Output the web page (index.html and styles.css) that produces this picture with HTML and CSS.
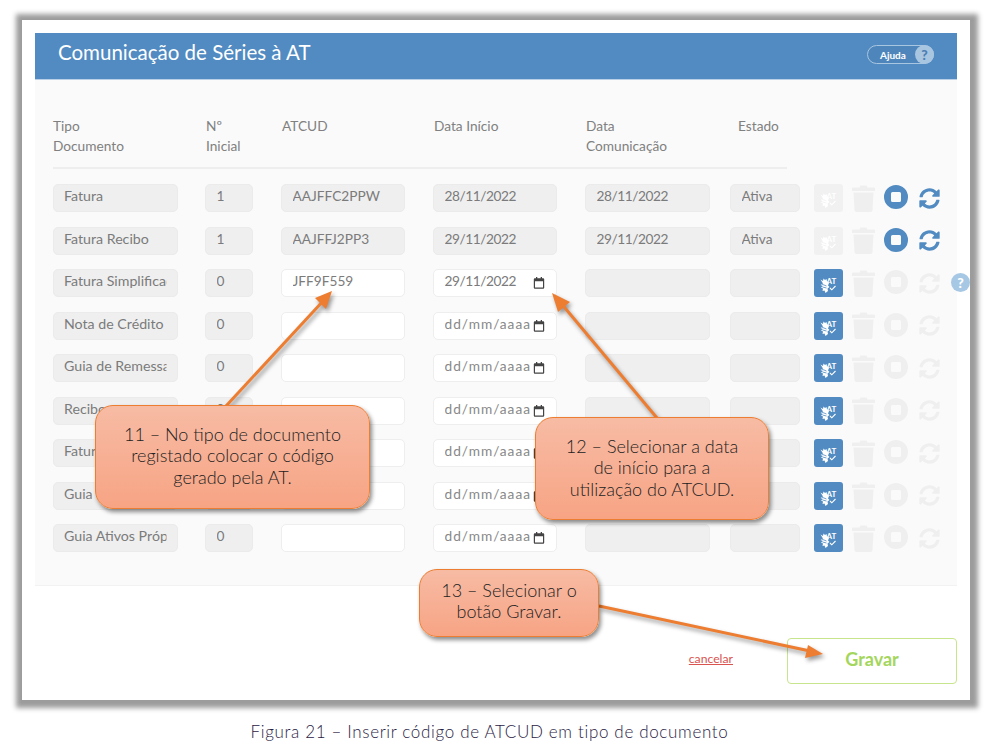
FILE: index.html
```html
<!DOCTYPE html>
<html lang="pt">
<head>
<meta charset="utf-8">
<title>Comunicação de Séries à AT</title>
<link rel="stylesheet" href="styles.css">
</head>
<body>
<svg class="defs" width="0" height="0" aria-hidden="true">
  <symbol id="at" viewBox="0 0 28 28">
    <path fill="#fff" d="M6 10.500l2.500 1.500 .5-2.500 1.500 1.500 1.500-1 .5 2 2 2-1 2.500 1.500 1.500-2 1.500 .5 2.500-2.500 2-1-2.500-2 .5 .5-2.500-2-1 2-1.500-2.500-1 2.500-1.500z"/>
    <path fill="none" stroke="currentColor" stroke-width=".8" d="M7 15l5 2M8 18l4 1"/>
    <text x="17" y="14.500" class="at-text">AT</text>
    <path fill="none" stroke="#fff" stroke-width="1.100" d="M15.500 19l1.800 1.800 3.700-3.800"/>
  </symbol>
  <symbol id="trash" viewBox="0 0 23 27">
    <path d="M0 3.500q0-1 1-1h6.500l1-2h6l1 2H22q1 0 1 1V6H0zM1.500 7.500h20l-1 17.500a2 2 0 0 1-2 2H4.500a2 2 0 0 1-2-2z"/>
  </symbol>
  <symbol id="stop" viewBox="0 0 24 24">
    <path fill-rule="evenodd" d="M12 0a12 12 0 1 1 0 24a12 12 0 0 1 0-24zM8.500 7a1.500 1.500 0 0 0-1.500 1.500v7a1.500 1.500 0 0 0 1.500 1.500h7a1.500 1.500 0 0 0 1.500-1.500v-7a1.500 1.500 0 0 0-1.500-1.500z"/>
  </symbol>
  <symbol id="sync" viewBox="0 0 512 512">
    <path d="M370.72 133.28C339.458 104.008 298.888 87.962 255.848 88c-77.458.068-144.328 53.178-162.791 126.85-1.344 5.363-6.122 9.15-11.651 9.15H24.103c-7.498 0-13.194-6.807-11.807-14.176C33.933 94.924 134.813 8 256 8c66.448 0 126.791 26.136 171.315 68.685L463.03 40.97C478.149 25.851 504 36.559 504 57.941V192c0 13.255-10.745 24-24 24H345.941c-21.382 0-32.09-25.851-16.971-40.971l41.75-41.749zM32 296h134.059c21.382 0 32.09 25.851 16.971 40.971l-41.75 41.75c31.262 29.273 71.835 45.319 114.876 45.28 77.418-.07 144.315-53.144 162.787-126.849 1.344-5.363 6.122-9.15 11.651-9.15h57.304c7.498 0 13.194 6.807 11.807 14.176C478.067 417.076 377.187 504 256 504c-66.448 0-126.791-26.136-171.315-68.685L48.97 471.03C33.851 486.149 8 475.441 8 454.059V320c0-13.255 10.745-24 24-24z"/>
  </symbol>
  <symbol id="cal" viewBox="0 0 12 12">
    <path fill-rule="evenodd" d="M3 0h1.300v1.200h3.400V0H9v1.200h1.200A1 1 0 0 1 11.200 2.200v8.600a1 1 0 0 1-1 1H1.800a1 1 0 0 1-1-1V2.200a1 1 0 0 1 1-1H3zM2 4.200v6.400h8V4.200z"/>
  </symbol>
</svg>

<main class="frame">
  <section class="panel">
    <header class="panel-head">
      <h1 class="title">Comunicação de Séries à AT</h1>
      <div class="ajuda"><span class="ajuda-label">Ajuda</span><span class="ajuda-q">?</span></div>
    </header>
    <div class="panel-body">
      <div class="table-head">
        <div class="th c1 th-first">Tipo<br>Documento</div>
        <div class="th c2">Nº<br>Inicial</div>
        <div class="th c3">ATCUD</div>
        <div class="th c4">Data Início</div>
        <div class="th c5">Data<br>Comunicação</div>
        <div class="th c6 th-estado">Estado</div>
      </div>

      <div class="row">
        <div class="field c1">Fatura</div><div class="field c2">1</div><div class="field c3">AAJFFC2PPW</div><div class="field c4 num">28/11/2022</div><div class="field c5 num">28/11/2022</div><div class="field c6">Ativa</div>
        <div class="actions">
          <span class="at-btn off"><svg class="i-at"><use href="#at"/></svg></span>
          <svg class="i-trash"><use href="#trash"/></svg>
          <svg class="i-stop on"><use href="#stop"/></svg>
          <svg class="i-sync on"><use href="#sync"/></svg>
        </div>
      </div>
      <div class="row">
        <div class="field c1">Fatura Recibo</div><div class="field c2">1</div><div class="field c3">AAJFFJ2PP3</div><div class="field c4 num">29/11/2022</div><div class="field c5 num">29/11/2022</div><div class="field c6">Ativa</div>
        <div class="actions">
          <span class="at-btn off"><svg class="i-at"><use href="#at"/></svg></span>
          <svg class="i-trash"><use href="#trash"/></svg>
          <svg class="i-stop on"><use href="#stop"/></svg>
          <svg class="i-sync on"><use href="#sync"/></svg>
        </div>
      </div>
      <div class="row">
        <div class="field c1">Fatura Simplificada</div><div class="field c2">0</div><div class="field c3 edit">JFF9F559</div>
        <div class="field c4 edit date num"><span class="date-text">29/11/2022</span><svg class="i-cal"><use href="#cal"/></svg></div>
        <div class="field c5"></div><div class="field c6"></div>
        <div class="actions">
          <span class="at-btn"><svg class="i-at"><use href="#at"/></svg></span>
          <svg class="i-trash"><use href="#trash"/></svg>
          <svg class="i-stop"><use href="#stop"/></svg>
          <svg class="i-sync"><use href="#sync"/></svg>
          <span class="row-help">?</span>
        </div>
      </div>
      <div class="row">
        <div class="field c1">Nota de Crédito</div><div class="field c2">0</div><div class="field c3 edit"></div>
        <div class="field c4 edit date"><span class="date-text ph">dd/mm/aaaa</span><svg class="i-cal"><use href="#cal"/></svg></div>
        <div class="field c5"></div><div class="field c6"></div>
        <div class="actions">
          <span class="at-btn"><svg class="i-at"><use href="#at"/></svg></span>
          <svg class="i-trash"><use href="#trash"/></svg>
          <svg class="i-stop"><use href="#stop"/></svg>
          <svg class="i-sync"><use href="#sync"/></svg>
        </div>
      </div>
      <div class="row">
        <div class="field c1">Guia de Remessa</div><div class="field c2">0</div><div class="field c3 edit"></div>
        <div class="field c4 edit date"><span class="date-text ph">dd/mm/aaaa</span><svg class="i-cal"><use href="#cal"/></svg></div>
        <div class="field c5"></div><div class="field c6"></div>
        <div class="actions">
          <span class="at-btn"><svg class="i-at"><use href="#at"/></svg></span>
          <svg class="i-trash"><use href="#trash"/></svg>
          <svg class="i-stop"><use href="#stop"/></svg>
          <svg class="i-sync"><use href="#sync"/></svg>
        </div>
      </div>
      <div class="row">
        <div class="field c1">Recibo</div><div class="field c2">0</div><div class="field c3 edit"></div>
        <div class="field c4 edit date"><span class="date-text ph">dd/mm/aaaa</span><svg class="i-cal"><use href="#cal"/></svg></div>
        <div class="field c5"></div><div class="field c6"></div>
        <div class="actions">
          <span class="at-btn"><svg class="i-at"><use href="#at"/></svg></span>
          <svg class="i-trash"><use href="#trash"/></svg>
          <svg class="i-stop"><use href="#stop"/></svg>
          <svg class="i-sync"><use href="#sync"/></svg>
        </div>
      </div>
      <div class="row">
        <div class="field c1">Fatura</div><div class="field c2">0</div><div class="field c3 edit"></div>
        <div class="field c4 edit date"><span class="date-text ph">dd/mm/aaaa</span><svg class="i-cal"><use href="#cal"/></svg></div>
        <div class="field c5"></div><div class="field c6"></div>
        <div class="actions">
          <span class="at-btn"><svg class="i-at"><use href="#at"/></svg></span>
          <svg class="i-trash"><use href="#trash"/></svg>
          <svg class="i-stop"><use href="#stop"/></svg>
          <svg class="i-sync"><use href="#sync"/></svg>
        </div>
      </div>
      <div class="row">
        <div class="field c1">Guia</div><div class="field c2">0</div><div class="field c3 edit"></div>
        <div class="field c4 edit date"><span class="date-text ph">dd/mm/aaaa</span><svg class="i-cal"><use href="#cal"/></svg></div>
        <div class="field c5"></div><div class="field c6"></div>
        <div class="actions">
          <span class="at-btn"><svg class="i-at"><use href="#at"/></svg></span>
          <svg class="i-trash"><use href="#trash"/></svg>
          <svg class="i-stop"><use href="#stop"/></svg>
          <svg class="i-sync"><use href="#sync"/></svg>
        </div>
      </div>
      <div class="row">
        <div class="field c1">Guia Ativos Próprios</div><div class="field c2">0</div><div class="field c3 edit"></div>
        <div class="field c4 edit date"><span class="date-text ph">dd/mm/aaaa</span><svg class="i-cal"><use href="#cal"/></svg></div>
        <div class="field c5"></div><div class="field c6"></div>
        <div class="actions">
          <span class="at-btn"><svg class="i-at"><use href="#at"/></svg></span>
          <svg class="i-trash"><use href="#trash"/></svg>
          <svg class="i-stop"><use href="#stop"/></svg>
          <svg class="i-sync"><use href="#sync"/></svg>
        </div>
      </div>
    </div>
    <footer class="panel-foot">
      <a class="cancel">cancelar</a>
      <button class="save">Gravar</button>
    </footer>
  </section>
</main>
<p class="caption">Figura 21 – Inserir código de ATCUD em tipo de documento</p>

<svg class="arrows" width="996" height="750" aria-hidden="true">
  <g class="arrow">
    <path class="a-line" d="M226 406L324 300"/><path class="a-head" d="M332 291L326 309L315 298z"/>
  </g>
  <g class="arrow">
    <path class="a-line" d="M657 418L560 302"/><path class="a-head" d="M552 293L570 302L558 312z"/>
  </g>
  <g class="arrow">
    <path class="a-line" d="M599 606L810 651"/><path class="a-head" d="M823 654L805 658L808 645z"/>
  </g>
</svg>
<div class="note note-1"><span>11 – No tipo de documento<br>registado colocar o código<br>gerado pela AT.</span></div>
<div class="note note-2"><span>12 – Selecionar a data<br>de início para a<br>utilização do ATCUD.</span></div>
<div class="note note-3"><span>13 – Selecionar o<br>botão Gravar.</span></div>
</body>
</html>
```
FILE: styles.css
```css
* { box-sizing: border-box; }
html, body { margin: 0; padding: 0; }
body {
  position: relative;
  width: 996px;
  height: 750px;
  overflow: hidden;
  background: #fff;
  font-family: "Lato", "Open Sans", sans-serif;
  color: #777;
}
.defs { position: absolute; }

.frame {
  margin: 20px 0 0 22px;
  width: 948px;
  height: 680px;
  padding: 13px;
  background: #fff;
  box-shadow: 1px 1px 5px 7px #9c9c9c;
}
.panel { width: 922px; }
.panel-head {
  display: flex;
  align-items: center;
  justify-content: space-between;
  height: 47px;
  padding: 0 23px;
  background: #518bc1;
  border-bottom: 1px solid #b9d0e6;
}
.title {
  margin: -9px 0 0;
  font-size: 20.500px;
  font-weight: 400;
  color: #fff;
}
.ajuda {
  display: flex;
  align-items: center;
  justify-content: space-between;
  width: 67px;
  height: 19px;
  margin-top: -3px;
  padding-left: 12px;
  border: 1px solid #a9c6e1;
  border-radius: 10px;
  background: #4e86bb;
  color: #fff;
  font-size: 10px;
  font-weight: 700;
}
.ajuda-q {
  display: flex;
  align-items: center;
  justify-content: center;
  width: 19px;
  height: 19px;
  margin-right: -1px;
  border-radius: 50%;
  background: #a9c6e1;
  color: #4c80b3;
  font-size: 14px;
  font-weight: 900;
}

.panel-body {
  height: 506px;
  padding: 36px 0 0 18px;
  background: #fafafa;
  border-bottom: 1px solid #f2f2f2;
}
.table-head {
  display: flex;
  width: 734px;
  height: 53px;
  border-bottom: 2px solid #eeeeee;
}
.th {
  padding-left: 1px;
  font-size: 13.700px;
  line-height: 19.500px;
  color: #808080;
}
.th-first { padding-left: 0; }
.th-estado { padding-left: 8px; }

.c1 { width: 125px; margin-right: 27px; flex: none; }
.c2 { width: 48px; margin-right: 28px; flex: none; }
.c3 { width: 124px; margin-right: 28px; flex: none; }
.c4 { width: 124px; margin-right: 28px; flex: none; }
.c5 { width: 125px; margin-right: 20px; flex: none; }
.c6 { width: 70px; flex: none; }

.row {
  display: flex;
  align-items: center;
  height: 28px;
  margin-top: 14.500px;
}
.table-head + .row { margin-top: 15px; }
.field {
  height: 28px;
  padding: 0 10.500px;
  border: 1px solid #ebebeb;
  border-radius: 5px;
  background: #efefef;
  font-size: 13.700px;
  line-height: 22px;
  color: #7b7b7b;
  white-space: nowrap;
  overflow: clip;
  overflow-clip-margin: content-box;
}
.field.c1 { padding-left: 10px; font-size: 14.200px; }
.num { letter-spacing: -.45px; }
.edit {
  background: #fff;
  border-color: #eeeeee;
}
.date {
  display: flex;
  align-items: flex-start;
  justify-content: space-between;
  padding-right: 11px;
}
.date-text {
  flex: 0 1 85px;
  overflow: hidden;
}
.ph { letter-spacing: 1px; color: #888; }
.i-cal {
  flex: none;
  width: 12px;
  height: 12px;
  margin-top: 7px;
  fill: #444;
}

.actions {
  display: flex;
  align-items: center;
  margin-left: 14px;
  height: 28px;
}
.at-btn {
  display: block;
  width: 29px;
  height: 28px;
  border-radius: 3px;
  background: #518bc1;
  color: #518bc1;
  margin-right: 9px;
}
.at-btn.off { background: #f1f1f1; color: #f1f1f1; }
.i-at { display: block; width: 29px; height: 28px; }
.at-text {
  fill: #fff;
  font-size: 8px;
  font-weight: 700;
  text-anchor: middle;
  font-family: "Lato", sans-serif;
}
.i-trash {
  width: 23px;
  height: 27px;
  margin-right: 9px;
  fill: #efefef;
}
.i-stop {
  width: 24px;
  height: 24px;
  margin-right: 11px;
  margin-bottom: 2px;
  fill: #efefef;
}
.i-sync {
  width: 21px;
  height: 21px;
  fill: #efefef;
}
.i-stop.on, .i-sync.on { fill: #518bc1; }
.row-help {
  display: flex;
  align-items: center;
  justify-content: center;
  width: 19px;
  height: 19px;
  margin-left: 11px;
  margin-bottom: 2px;
  border-radius: 50%;
  background: #a7c8e5;
  color: #fff;
  font-size: 14px;
  font-weight: 900;
}

.panel-foot {
  display: flex;
  align-items: center;
  justify-content: flex-end;
  height: 46px;
  margin-top: 52px;
}
.cancel {
  margin-right: 54px;
  padding-bottom: 5px;
  font-size: 12.200px;
  color: #d9534f;
  text-decoration: underline;
}
.save {
  width: 170px;
  height: 46px;
  padding: 0 0 4px;
  border: 1.500px solid #c6e58c;
  border-radius: 4px;
  background: #fff;
  color: #a4d65e;
  font-family: inherit;
  font-size: 18px;
  font-weight: 700;
}
.caption {
  margin: 21px 0 0;
  padding-right: 17px;
  text-align: center;
  font-size: 17px;
  font-weight: 300;
  letter-spacing: .66px;
  color: #2a2244;
}

.arrows { position: absolute; left: 0; top: 0; filter: drop-shadow(2px 3px 2px rgba(0,0,0,.4)); }
.a-line { fill: none; stroke: #ed7d31; stroke-width: 3; }
.a-head { fill: #ed7d31; }
.note {
  position: absolute;
  display: flex;
  align-items: center;
  justify-content: center;
  text-align: center;
  border: 1.500px solid #ed7d31;
  border-radius: 18px;
  background: linear-gradient(#f7bba4, #f7a484);
  box-shadow: 2px 3px 4px rgba(0,0,0,.45);
  color: #222;
  font-size: 18px;
  font-weight: 300;
  line-height: 21.500px;
}
.note-1 { left: 95px; top: 405px; width: 275px; height: 104px; padding-bottom: 2px; }
.note-2 { left: 535px; top: 417px; width: 234px; height: 103px; padding-bottom: 1px; }
.note-3 { left: 419px; top: 569px; width: 180px; height: 68px; padding-bottom: 4px; }
```
